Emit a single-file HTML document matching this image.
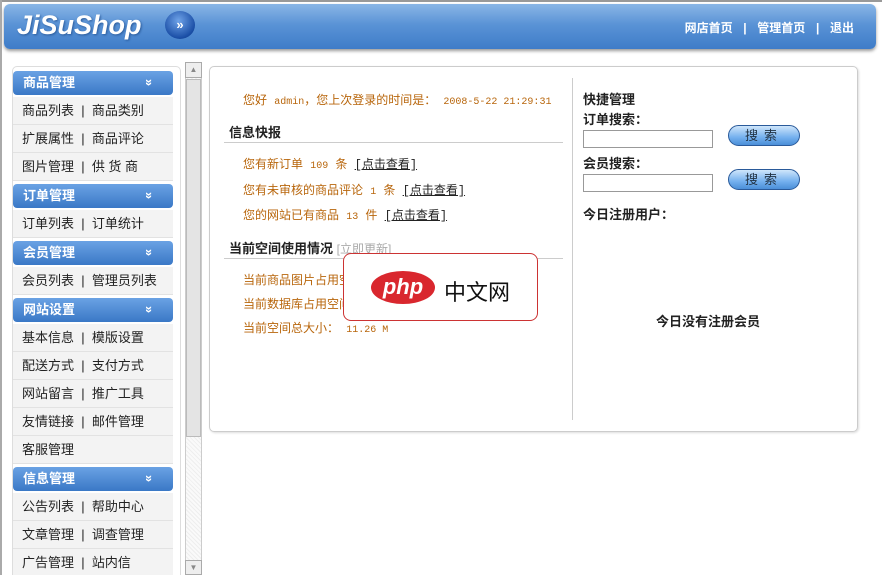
<!DOCTYPE html>
<html><head><meta charset="utf-8"><style>
*{margin:0;padding:0;box-sizing:border-box}
html,body{width:882px;height:575px;overflow:hidden}
body{background:#fff;font-family:"Liberation Sans","Noto Sans CJK SC",sans-serif;font-size:12px;color:#333;position:relative}
.a{position:absolute}
.top{left:4px;top:4px;width:872px;height:45px;border-radius:6px;background:linear-gradient(#8ab6e6 0%,#5a93d6 45%,#3e7cc8 100%);box-shadow:0 2px 3px #999}
.logo{left:17px;top:10px;font:italic bold 27px "Liberation Sans",sans-serif;color:#fff;letter-spacing:0px;text-shadow:1px 1px 2px #2a5a9a}
.ball{left:165px;top:11px;width:30px;height:28px;border-radius:50%;background:radial-gradient(circle at 45% 35%,#6fa3e8,#1a4ea6 70%,#0c2f70);color:#fff;font:bold 13px sans-serif;text-align:center;line-height:27px}
.nav{right:28px;top:19px;color:#fff;font-weight:bold;font-size:12px;word-spacing:2px}
.side{left:12px;top:66px;width:169px;height:520px;border:1px solid #ddd;border-radius:5px}
.h{left:13px;width:160px;height:24px;border-radius:4px;background:linear-gradient(#6aa2e4,#3a78c6);color:#fff;font-weight:bold;font-size:13px;line-height:23px;padding-left:10px}
.h:after{content:"»";position:absolute;right:20px;top:0;transform:rotate(90deg);font-size:13px}
.i{left:13px;width:160px;height:28px;line-height:28px;padding-left:9px;background:#f3f3f3;border-bottom:1px solid #e2e2e2;font-size:13px;color:#222}
.sb{left:185px;top:62px;width:17px;height:513px;background:repeating-linear-gradient(45deg,#eee 0 1px,#fafafa 1px 3px);border:1px solid #ccc}
.main{left:209px;top:66px;width:649px;height:366px;border:1px solid #ccc;border-radius:5px;box-shadow:1px 1px 2px #ddd}
.or{color:#b8660c;font-size:12px;font-family:"Liberation Mono","Noto Sans CJK SC",monospace}
.or b{font-weight:normal;font-size:10px}
.bl{font-weight:bold;color:#222;font-size:13px}
.ln{text-decoration:underline;color:#222}
input{position:absolute;width:130px;height:18px;border:1px solid #999;background:#fff}
.btn{position:absolute;width:72px;height:21px;border-radius:11px;background:linear-gradient(#cfe6fb,#74b0ee 60%,#4b8fd8);border:1px solid #2a5a9a;text-align:center;line-height:19px;color:#234;font-size:13px;letter-spacing:6px}
</style></head><body>
<div class="a" style="left:0;top:0;width:882px;height:2px;background:#999"></div>
<div class="a" style="left:0;top:0;width:2px;height:575px;background:#aaa"></div>
<div class="a top"></div>
<div class="a logo">JiSuShop</div>
<div class="a ball">»</div>
<div class="a nav">网店首页 &nbsp;| &nbsp;管理首页 &nbsp;| &nbsp;退出</div>
<div class="a side"></div>
<div class="a h" style="top:71px">商品管理</div>
<div class="a i" style="top:97px">商品列表 &nbsp;| &nbsp;商品类别</div>
<div class="a i" style="top:125px">扩展属性 &nbsp;| &nbsp;商品评论</div>
<div class="a i" style="top:153px">图片管理 &nbsp;| &nbsp;供 货 商</div>
<div class="a h" style="top:184px">订单管理</div>
<div class="a i" style="top:210px">订单列表 &nbsp;| &nbsp;订单统计</div>
<div class="a h" style="top:241px">会员管理</div>
<div class="a i" style="top:267px">会员列表 &nbsp;| &nbsp;管理员列表</div>
<div class="a h" style="top:298px">网站设置</div>
<div class="a i" style="top:324px">基本信息 &nbsp;| &nbsp;模版设置</div>
<div class="a i" style="top:352px">配送方式 &nbsp;| &nbsp;支付方式</div>
<div class="a i" style="top:380px">网站留言 &nbsp;| &nbsp;推广工具</div>
<div class="a i" style="top:408px">友情链接 &nbsp;| &nbsp;邮件管理</div>
<div class="a i" style="top:436px">客服管理</div>
<div class="a h" style="top:467px">信息管理</div>
<div class="a i" style="top:493px">公告列表 &nbsp;| &nbsp;帮助中心</div>
<div class="a i" style="top:521px">文章管理 &nbsp;| &nbsp;调查管理</div>
<div class="a i" style="top:549px">广告管理 &nbsp;| &nbsp;站内信</div>
<div class="a sb"></div>
<div class="a" style="left:185px;top:62px;width:17px;height:16px;background:#eee;border:1px solid #aaa;font-size:8px;color:#888;text-align:center;line-height:14px">▲</div>
<div class="a" style="left:186px;top:79px;width:15px;height:358px;background:#e4e4e4;border:1px solid #bbb"></div>
<div class="a" style="left:185px;top:560px;width:17px;height:15px;background:#eee;border:1px solid #aaa;font-size:8px;color:#888;text-align:center;line-height:13px">▼</div>
<div class="a main"></div>
<div class="a" style="left:572px;top:78px;width:1px;height:342px;background:#ccc"></div>
<div class="a or" style="left:243px;top:91px">您好 <b>admin</b>，您上次登录的时间是： <b>2008-5-22 21:29:31</b></div>
<div class="a bl" style="left:229px;top:122px">信息快报</div>
<div class="a" style="left:224px;top:142px;width:339px;height:1px;background:#ccc"></div>
<div class="a or" style="left:243px;top:155px">您有新订单 <b>109</b> 条 <span class="ln">[点击查看]</span></div>
<div class="a or" style="left:243px;top:181px">您有未审核的商品评论 <b>1</b> 条 <span class="ln">[点击查看]</span></div>
<div class="a or" style="left:243px;top:206px">您的网站已有商品 <b>13</b> 件 <span class="ln">[点击查看]</span></div>
<div class="a bl" style="left:229px;top:238px">当前空间使用情况 <span style="color:#aaa;font-weight:normal;font-size:12px">[立即更新]</span></div>
<div class="a" style="left:224px;top:258px;width:339px;height:1px;background:#ccc"></div>
<div class="a or" style="left:243px;top:271px">当前商品图片占用空间：</div>
<div class="a or" style="left:243px;top:295px">当前数据库占用空间：</div>
<div class="a or" style="left:243px;top:319px">当前空间总大小： <b>11.26 M</b></div>
<div class="a" style="left:343px;top:253px;width:195px;height:68px;background:#fff;border:1px solid #c33;border-radius:8px"></div>
<div class="a" style="left:371px;top:271px;width:64px;height:33px;border-radius:50%;background:#d9272e;color:#fff;font:italic bold 22px sans-serif;text-align:center;line-height:31px">php</div>
<div class="a" style="left:444px;top:275px;font-size:22px;color:#111">中文网</div>
<div class="a bl" style="left:583px;top:89px">快捷管理</div>
<div class="a bl" style="left:583px;top:109px">订单搜索：</div>
<input style="left:583px;top:130px">
<div class="btn" style="left:728px;top:125px">搜索</div>
<div class="a bl" style="left:583px;top:153px">会员搜索：</div>
<input style="left:583px;top:174px">
<div class="btn" style="left:728px;top:169px">搜索</div>
<div class="a bl" style="left:583px;top:204px">今日注册用户：</div>
<div class="a bl" style="left:656px;top:311px">今日没有注册会员</div>
</body></html>
